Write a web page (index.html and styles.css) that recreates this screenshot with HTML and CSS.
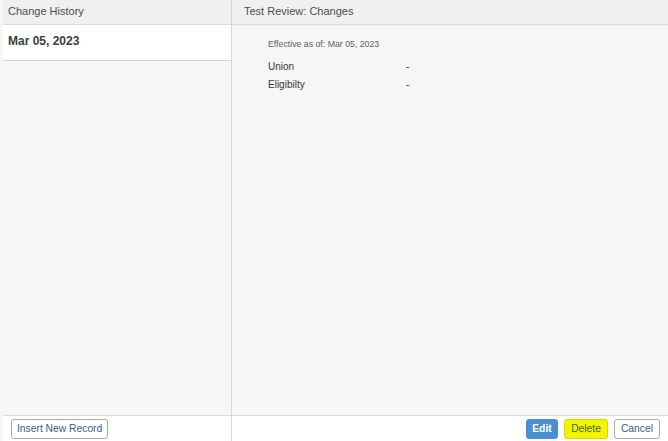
FILE: index.html
```html
<!DOCTYPE html>
<html>
<head>
<meta charset="utf-8">
<link rel="stylesheet" href="styles.css">
</head>
<body>
<div class="app">
  <div class="left">
    <div class="head">Change History</div>
    <div class="list">
      <div class="item">Mar 05, 2023</div>
    </div>
    <div class="foot">
      <button class="btn">Insert New Record</button>
    </div>
  </div>
  <div class="right">
    <div class="head head-r">Test Review: Changes</div>
    <div class="content">
      <div class="effective">Effective as of: Mar 05, 2023</div>
      <div class="field"><span class="label">Union</span><span class="value">-</span></div>
      <div class="field"><span class="label">Eligibilty</span><span class="value">-</span></div>
    </div>
    <div class="foot foot-r">
      <button class="btn btn-edit">Edit</button>
      <button class="btn btn-delete">Delete</button>
      <button class="btn btn-cancel">Cancel</button>
    </div>
  </div>
</div>
</body>
</html>
```

FILE: styles.css
```css
html, body {
  margin: 0;
  padding: 0;
  height: 100%;
}
body {
  font-family: "Liberation Sans", Arial, sans-serif;
  background: #f6f6f6;
  color: #32363a;
}
.app {
  display: flex;
  height: 441px;
  width: 668px;
}
.left {
  width: 228px;
  padding-left: 3px;
  border-right: 1px solid #d6d6d6;
  display: flex;
  flex-direction: column;
}
.right {
  flex: 1;
  display: flex;
  flex-direction: column;
}
.head {
  height: 24px;
  line-height: 22px;
  background: #f0f0f0;
  border-bottom: 1px solid #dadada;
  font-size: 11px;
  color: #4a4e52;
  padding-left: 5px;
  box-shadow: 0 1px 1px rgba(0,0,0,0.04);
}
.head-r {
  padding-left: 12px;
}
.list {
  flex: 1;
  background: #f6f6f6;
}
.item {
  height: 35px;
  line-height: 33px;
  background: #fff;
  border-bottom: 1px solid #d4d4d4;
  font-size: 12px;
  font-weight: bold;
  padding-left: 5px;
  color: #3a3e42;
}
.content {
  flex: 1;
  padding: 14px 0 0 36px;
}
.effective {
  font-size: 8.75px;
  color: #5a5e62;
  margin-bottom: 9px;
}
.field {
  display: flex;
  font-size: 10px;
  height: 18px;
  line-height: 18px;
  color: #32363a;
}
.label {
  width: 138px;
}
.foot {
  background: #fff;
  border-top: 1px solid #d9d9d9;
  display: flex;
  align-items: flex-start;
  padding: 3px 0 0 8px;
  box-sizing: border-box;
  height: 26px;
}
.foot-r {
  justify-content: flex-end;
  padding: 3px 8px 0 0;
  gap: 6px;
}
.btn {
  font-family: "Liberation Sans", Arial, sans-serif;
  font-size: 10.3px;
  height: 20px;
  padding: 0 5px;
  background: #fff;
  color: #346187;
  border: 1px solid #a7acb2;
  border-radius: 3px;
  line-height: 18px;
}
.btn-edit {
  background: #4a8fd1;
  border-color: #4a8fd1;
  color: #fff;
  font-weight: bold;
  padding: 0 5.5px;
}
.btn-delete {
  background: #f4f400;
  border-color: #d8d800;
  color: #3f6a24;
  padding: 0 6px;
}
.btn-cancel {
  padding: 0 6px;
}
```
